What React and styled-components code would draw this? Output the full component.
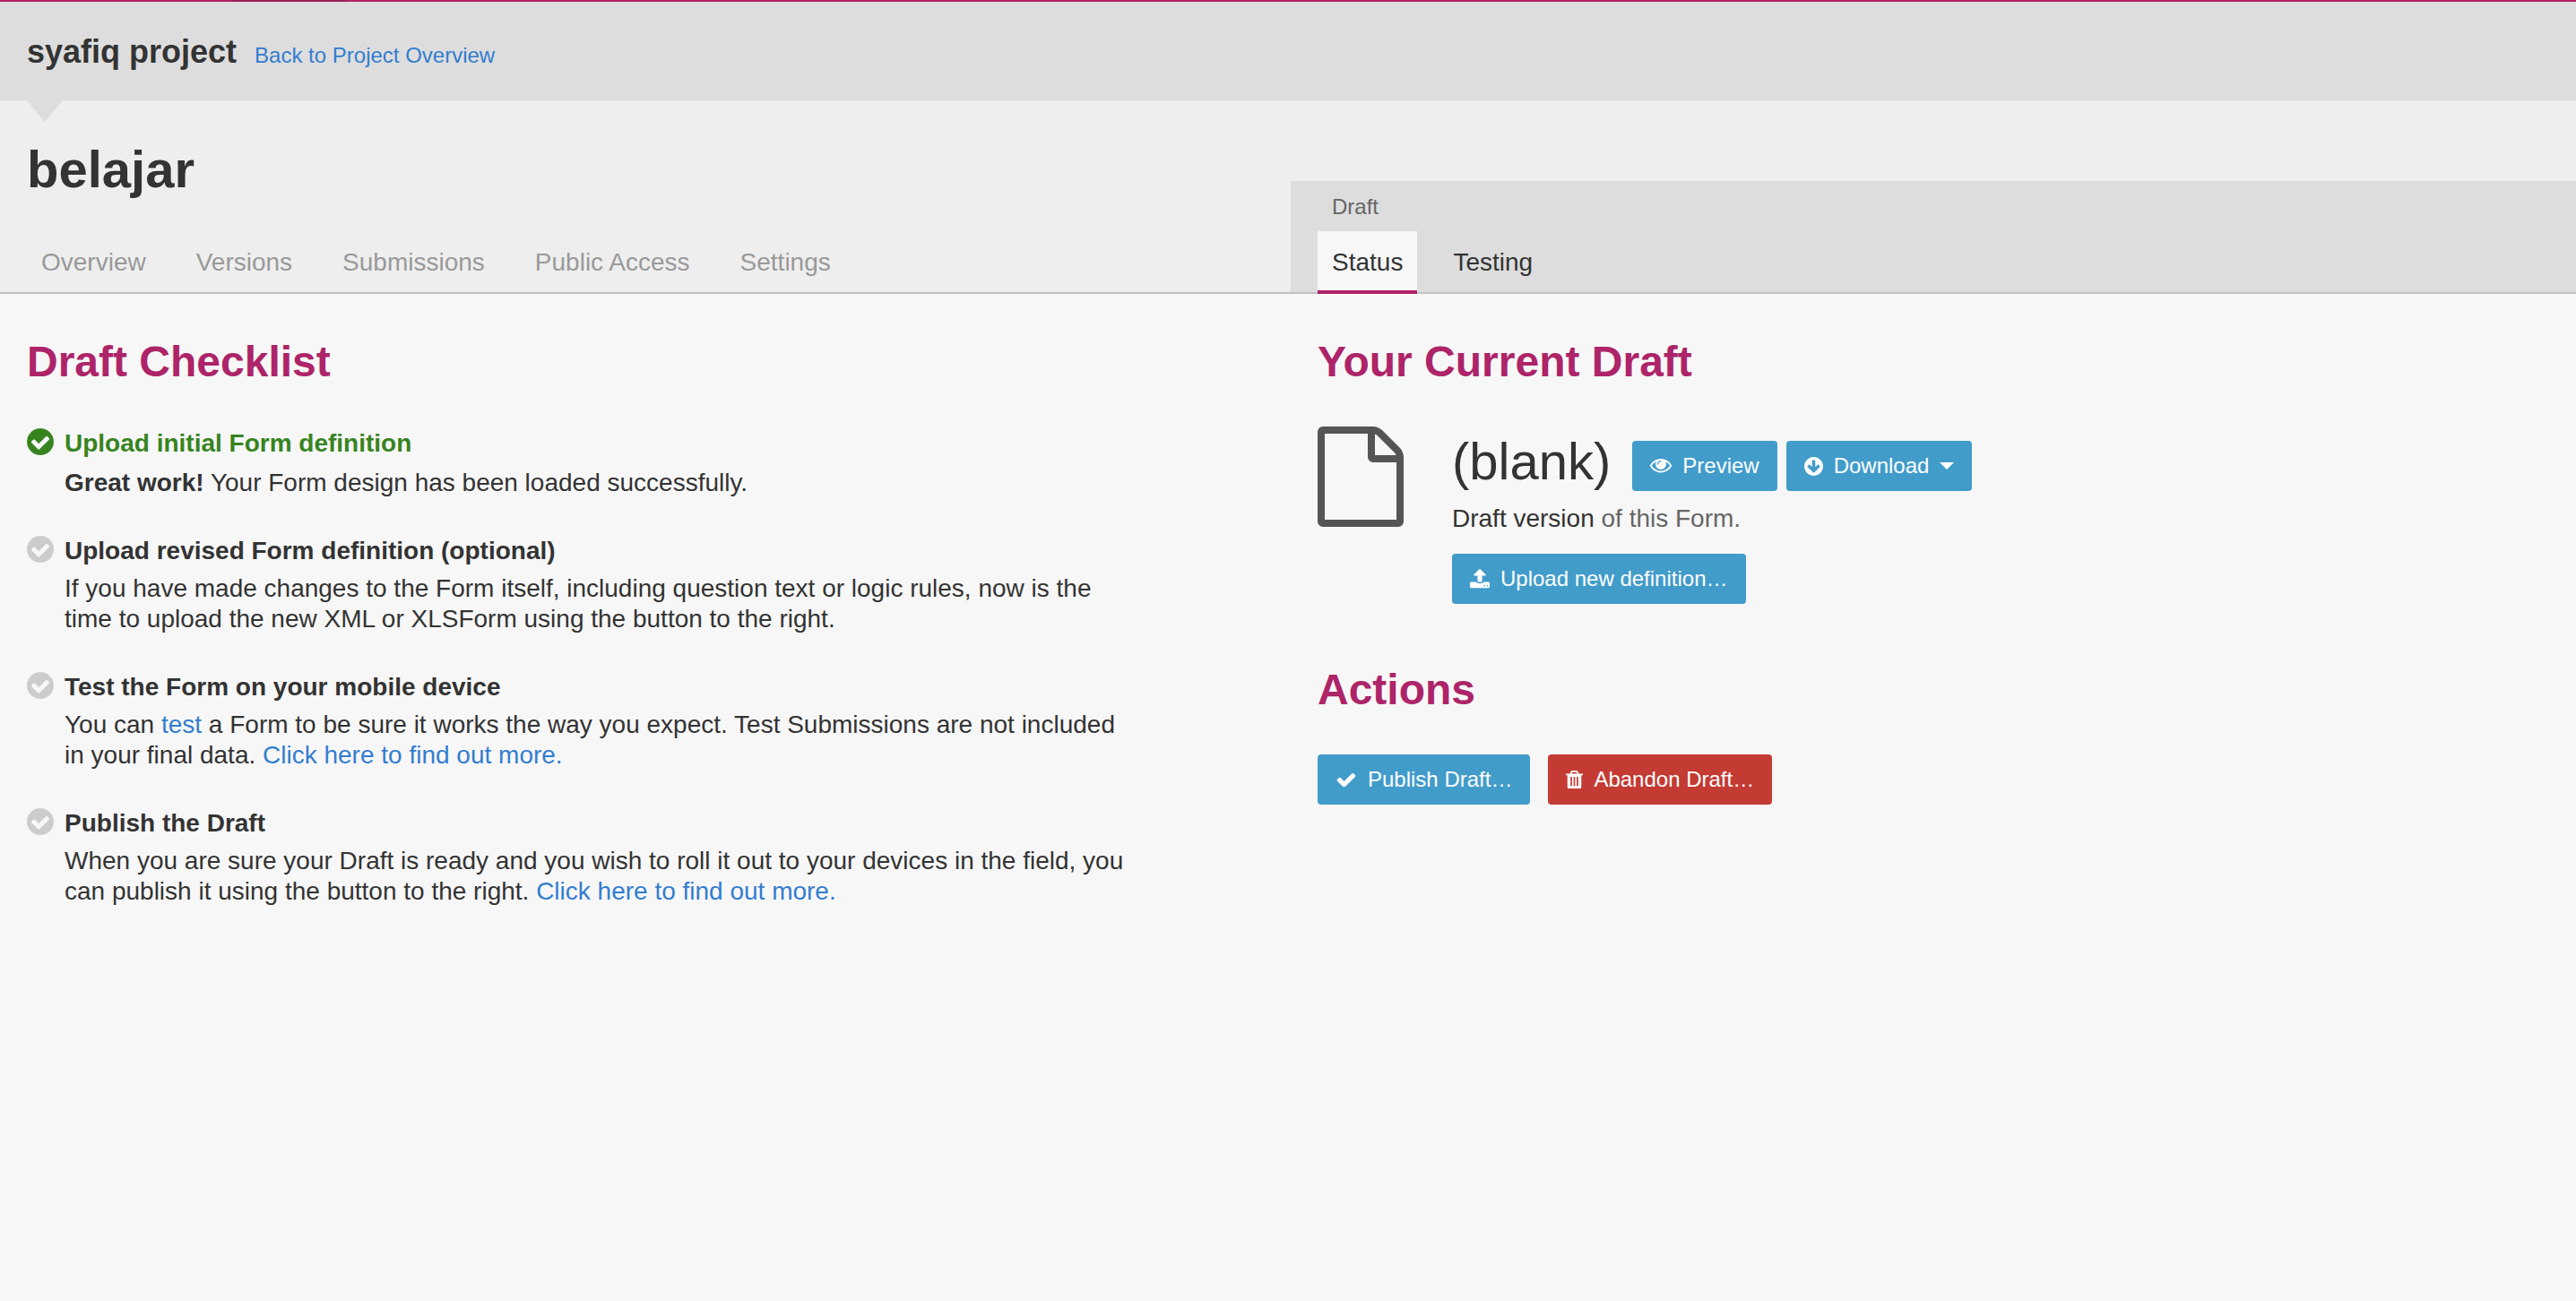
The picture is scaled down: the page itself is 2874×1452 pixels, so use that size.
import React from "react";
import styled, { createGlobalStyle } from "styled-components";

const GlobalStyle = createGlobalStyle`
  *, *::before, *::after { box-sizing: border-box; }
  body {
    margin: 0;
    background: #f7f7f7;
    color: #333;
    font-family: "Liberation Sans", Arial, sans-serif;
    font-size: 28px;
    line-height: 34px;
  }
  h1, h2, h3, p { margin: 0; }
`;

/* ---------- icons ---------- */

const ICONS = {
  check: {
    box: "0 268 1792 1254",
    d: "M1671 566q0 40-28 68l-724 724-136 136q-28 28-68 28t-68-28l-136-136-362-362q-28-28-28-68t28-68l136-136q28-28 68-28t68 28l294 295 656-657q28-28 68-28t68 28l136 136q28 28 28 68z",
  },
  checkCircle: {
    box: "128 128 1536 1536",
    d: "M1412 734q0-28-18-46l-91-90q-19-19-45-19t-45 19l-408 407-226-226q-19-19-45-19t-45 19l-91 90q-18 18-18 46 0 27 18 45l362 362q19 19 45 19 27 0 46-19l543-543q18-18 18-45zm252 162q0 209-103 385.5t-279.5 279.5-385.5 103-385.5-103-279.5-279.5-103-385.5 103-385.5 279.5-279.5 385.5-103 385.5 103 279.5 279.5 103 385.5z",
  },
  eye: {
    box: "0 384 1792 1152",
    d: "M1664 960q-152-236-381-353 61 104 61 225 0 185-131.5 316.5t-316.5 131.5-316.5-131.5-131.5-316.5q0-121 61-225-229 117-381 353 133 205 333.5 326.5t434.5 121.5 434.5-121.5 333.5-326.5zm-720-384q0-20-14-34t-34-14q-125 0-214.5 89.5t-89.5 214.5q0 20 14 34t34 14 34-14 14-34q0-86 61-147t147-61q20 0 34-14t14-34zm848 384q0 34-20 69-140 230-376.5 368.5t-499.5 138.5-499.5-139-376.5-368q-20-35-20-69t20-69q140-229 376.5-368t499.5-139 499.5 139 376.5 368q20 35 20 69z",
  },
  arrowCircleDown: {
    box: "128 128 1536 1536",
    d: "M1412 897q0-27-18-45l-91-91q-18-18-45-18t-45 18l-189 189v-502q0-26-19-45t-45-19h-128q-26 0-45 19t-19 45v502l-189-189q-19-19-45-19t-45 19l-91 91q-18 18-18 45t18 45l362 362 91 91q18 18 45 18t45-18l91-91 362-362q18-18 18-45zm252-1q0 209-103 385.5t-279.5 279.5-385.5 103-385.5-103-279.5-279.5-103-385.5 103-385.5 279.5-279.5 385.5-103 385.5 103 279.5 279.5 103 385.5z",
  },
  upload: {
    box: "64 64 1664 1600",
    d: "M1344 1472q0-26-19-45t-45-19-45 19-19 45 19 45 45 19 45-19 19-45zm256 0q0-26-19-45t-45-19-45 19-19 45 19 45 45 19 45-19 19-45zm128-224v320q0 40-28 68t-68 28h-1472q-40 0-68-28t-28-68v-320q0-40 28-68t68-28h427q21 56 70.5 92t110.5 36h256q61 0 110.5-36t70.5-92h427q40 0 68 28t28 68zm-325-648q-17 40-59 40h-256v448q0 26-19 45t-45 19h-256q-26 0-45-19t-19-45v-448h-256q-42 0-59-40-17-39 14-69l448-448q18-19 45-19t45 19l448 448q31 30 14 69z",
  },
  trash: {
    box: "192 128 1408 1536",
    d: "M704 1376v-704q0-14-9-23t-23-9h-64q-14 0-23 9t-9 23v704q0 14 9 23t23 9h64q14 0 23-9t9-23zm256 0v-704q0-14-9-23t-23-9h-64q-14 0-23 9t-9 23v704q0 14 9 23t23 9h64q14 0 23-9t9-23zm256 0v-704q0-14-9-23t-23-9h-64q-14 0-23 9t-9 23v704q0 14 9 23t23 9h64q14 0 23-9t9-23zm-544-992h448l-48-117q-7-9-17-11h-317q-10 2-17 11zm928 32v64q0 14-9 23t-23 9h-96v948q0 83-47 143.5t-113 60.5h-832q-66 0-113-58.5t-47-141.5v-952h-96q-14 0-23-9t-9-23v-64q0-14 9-23t23-9h309l70-167q15-37 54-63t79-26h320q40 0 79 26t54 63l70 167h309q14 0 23 9t9 23z",
  },
  file: {
    box: "128 0 1536 1792",
    d: "M1596 380q28 28 48 76t20 88v1152q0 40-28 68t-68 28h-1344q-40 0-68-28t-28-68v-1600q0-40 28-68t68-28h896q40 0 88 20t76 48zm-444-244v376h376q-10-29-22-41l-313-313q-12-12-41-22zm384 1528v-1024h-416q-40 0-68-28t-28-68v-416h-768v1536h1280z",
  },
};

const Svg = styled.svg`
  display: block;
  flex: none;
  width: ${(p) => p.$width}px;
  fill: currentColor;
`;

function Icon({ name, width }) {
  const { box, d } = ICONS[name];
  return (
    <Svg viewBox={box} $width={width} aria-hidden="true">
      <path d={d} />
    </Svg>
  );
}

/* ---------- shared parts ---------- */

const Link = styled.a`
  color: #337dcf;
  text-decoration: none;
`;

const Columns = styled.div`
  display: grid;
  grid-template-columns: calc(50% + 3px) 1fr;
`;

const SectionTitle = styled.h2`
  color: #ad2469;
  font-size: 48px;
  line-height: 52px;
  font-weight: bold;
`;

const Button = styled.button`
  display: inline-flex;
  align-items: center;
  gap: 12px;
  height: 56px;
  padding: 0 20px;
  border: 0;
  border-radius: 4px;
  background: ${(p) => (p.$danger ? "#c33b33" : "#429cca")};
  color: #fff;
  font: inherit;
  font-size: 24px;
  line-height: 36px;
  white-space: nowrap;
`;

const Caret = styled.span`
  border: 8px solid transparent;
  border-top-color: currentColor;
  border-bottom: 0;
`;

/* ---------- page head ---------- */

const Accent = styled.div`
  height: 2px;
  background: linear-gradient(#9b2059, #9b2059) 258px 0 / 128px 2px no-repeat #b12268;
`;

const ProjectBar = styled.div`
  position: relative;
  display: flex;
  align-items: baseline;
  gap: 20px;
  height: 110px;
  padding: 34px 30px 0;
  background: #ddd;

  &::after {
    content: "";
    position: absolute;
    top: 100%;
    left: 30px;
    border: 20px solid transparent;
    border-top: 24px solid #ddd;
    border-bottom: 0;
  }
`;

const ProjectName = styled.span`
  font-size: 36px;
  line-height: 44px;
  font-weight: bold;
`;

const BackLink = styled(Link)`
  font-size: 24px;
`;

const FormHead = styled.header`
  background: #eee;
  border-bottom: 2px solid #c1c1c1;
`;

const FormTitle = styled.h1`
  padding: 44px 30px 0;
  font-size: 58px;
  line-height: 66px;
  height: 90px;
  font-weight: bold;
`;

const TabArea = styled.div`
  display: flex;
  flex-direction: column;
  justify-content: flex-end;
  padding: ${(p) => (p.$draft ? "16px 30px 0" : "0 30px")};
  background: ${(p) => (p.$draft ? "#ddd" : "transparent")};
`;

const DraftLabel = styled.div`
  padding: 0 16px;
  margin-bottom: 14px;
  color: #666;
  font-size: 24px;
  line-height: 26px;
`;

const Tabs = styled.nav`
  display: flex;
  gap: 24px;
  margin-bottom: -2px;
`;

const Tab = styled.a`
  height: 70px;
  padding: 18px 16px 0;
  border-bottom: 4px solid ${(p) => (p.$active ? "#b12268" : "transparent")};
  background: ${(p) => (p.$active ? "#f7f7f7" : "transparent")};
  color: ${(p) => (p.$muted ? "#999" : "#333")};
  text-decoration: none;
`;

/* ---------- page body ---------- */

const Pane = styled.section`
  padding: 50px 30px 0;
`;

const Checklist = styled.ul`
  display: flex;
  flex-direction: column;
  gap: 42px;
  max-width: 1235px;
  margin: 48px 0 0;
  padding: 0;
  list-style: none;
`;

const Step = styled.li`
  display: grid;
  grid-template-columns: 30px 1fr;
  column-gap: 12px;
  row-gap: ${(p) => (p.$done ? 10 : 8)}px;
`;

const StepMark = styled.span`
  color: ${(p) => (p.$done ? "#37841f" : "#ccc")};
`;

const StepTitle = styled.h3`
  font-size: 28px;
  line-height: 34px;
  color: ${(p) => (p.$done ? "#37841f" : "#333")};
`;

const StepText = styled.p`
  grid-column: 2;
`;

const Draft = styled.div`
  display: flex;
  align-items: flex-start;
  gap: 54px;
  margin-top: 46px;
  color: #555;
`;

const DraftInfo = styled.div`
  display: flex;
  flex-direction: column;
  align-items: flex-start;
  padding-top: 6px;
  color: #333;
`;

const VersionRow = styled.div`
  display: flex;
  align-items: flex-end;
  gap: 24px;
`;

const Version = styled.span`
  font-size: 58px;
  line-height: 66px;
`;

const ButtonGroup = styled.div`
  display: flex;
  gap: ${(p) => p.$gap}px;
`;

const VersionNote = styled.p`
  margin: 14px 0 22px;
  color: #666;

  span { color: #333; }
`;

const ActionsTitle = styled(SectionTitle)`
  margin: 70px 0 46px;
`;

function ChecklistStep({ title, done, children }) {
  return (
    <Step $done={done}>
      <StepMark $done={done}>
        <Icon name="checkCircle" width={30} />
      </StepMark>
      <StepTitle $done={done}>{title}</StepTitle>
      <StepText>{children}</StepText>
    </Step>
  );
}

export default function App() {
  return (
    <>
      <GlobalStyle />
      <Accent />
      <ProjectBar>
        <ProjectName>syafiq project</ProjectName>
        <BackLink href="#project">Back to Project Overview</BackLink>
      </ProjectBar>

      <FormHead>
        <FormTitle>belajar</FormTitle>
        <Columns>
          <TabArea>
            <Tabs aria-label="Form">
              {["Overview", "Versions", "Submissions", "Public Access", "Settings"].map((name) => (
                <Tab key={name} href="#" $muted>
                  {name}
                </Tab>
              ))}
            </Tabs>
          </TabArea>
          <TabArea $draft>
            <DraftLabel>Draft</DraftLabel>
            <Tabs aria-label="Draft">
              <Tab href="#status" $active>
                Status
              </Tab>
              <Tab href="#testing">Testing</Tab>
            </Tabs>
          </TabArea>
        </Columns>
      </FormHead>

      <Columns as="main">
        <Pane>
          <SectionTitle>Draft Checklist</SectionTitle>
          <Checklist>
            <ChecklistStep done title="Upload initial Form definition">
              <strong>Great work!</strong> Your Form design has been loaded successfully.
            </ChecklistStep>
            <ChecklistStep title="Upload revised Form definition (optional)">
              If you have made changes to the Form itself, including question text or logic rules,
              now is the time to upload the new XML or XLSForm using the button to the right.
            </ChecklistStep>
            <ChecklistStep title="Test the Form on your mobile device">
              You can <Link href="#testing">test</Link> a Form to be sure it works the way you
              expect. Test Submissions are not included in your final data.{" "}
              <Link href="#help">Click here to find out more.</Link>
            </ChecklistStep>
            <ChecklistStep title="Publish the Draft">
              When you are sure your Draft is ready and you wish to roll it out to your devices in
              the field, you can publish it using the button to the right.{" "}
              <Link href="#help">Click here to find out more.</Link>
            </ChecklistStep>
          </Checklist>
        </Pane>

        <Pane>
          <SectionTitle>Your Current Draft</SectionTitle>
          <Draft>
            <Icon name="file" width={96} />
            <DraftInfo>
              <VersionRow>
                <Version>(blank)</Version>
                <ButtonGroup $gap={10}>
                  <Button type="button">
                    <Icon name="eye" width={24} />
                    Preview
                  </Button>
                  <Button type="button">
                    <Icon name="arrowCircleDown" width={21} />
                    Download
                    <Caret />
                  </Button>
                </ButtonGroup>
              </VersionRow>
              <VersionNote>
                <span>Draft version</span> of this Form.
              </VersionNote>
              <Button type="button">
                <Icon name="upload" width={22} />
                Upload new definition…
              </Button>
            </DraftInfo>
          </Draft>

          <ActionsTitle>Actions</ActionsTitle>
          <ButtonGroup $gap={20}>
            <Button type="button">
              <Icon name="check" width={24} />
              Publish Draft…
            </Button>
            <Button type="button" $danger>
              <Icon name="trash" width={19} />
              Abandon Draft…
            </Button>
          </ButtonGroup>
        </Pane>
      </Columns>
    </>
  );
}
